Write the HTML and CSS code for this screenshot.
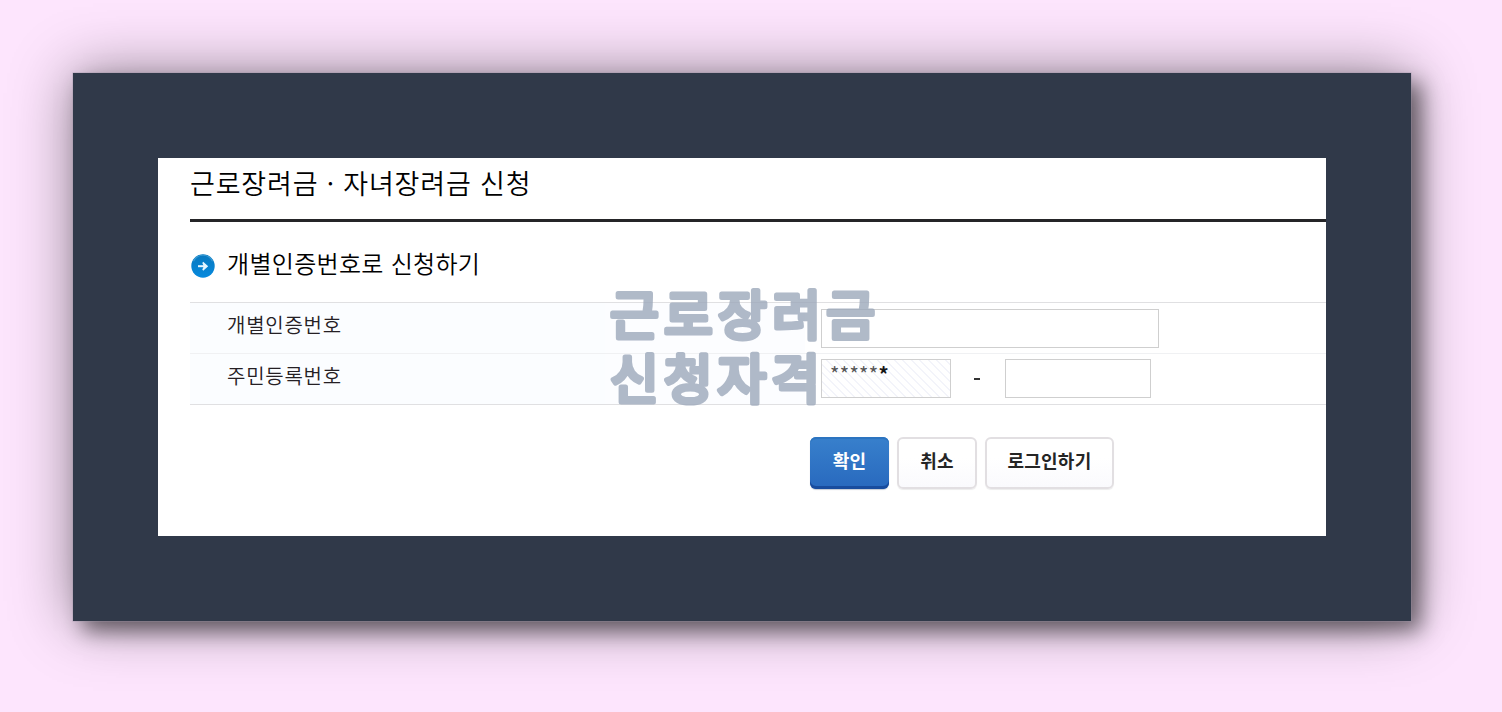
FILE: index.html
```
<!DOCTYPE html>
<html lang="ko">
<head>
<meta charset="utf-8">
<title>근로장려금 · 자녀장려금 신청</title>
<link rel="stylesheet" href="styles.css">
</head>
<body>
<div class="frame">
  <main class="panel">
    <h1 class="title">근로장려금 · 자녀장려금 신청</h1>
    <h2 class="subtitle">
      <svg class="arrow" viewBox="0 0 24 24" width="24" height="24">
        <defs><linearGradient id="disc" x1="0" y1="0" x2="0" y2="1"><stop offset="0" stop-color="#0878be"/><stop offset="1" stop-color="#078ade"/></linearGradient></defs>
        <circle cx="12" cy="12" r="11.7" fill="url(#disc)"/>
        <path d="M2.5 7.3a10.5 10.5 0 0 1 19 0" fill="none" stroke="#399bd4" stroke-width="1.2"/>
        <path d="M7 12.2h7" fill="none" stroke="#e6f6ff" stroke-width="2"/>
        <path d="M12.2 7.7l5 4.5-5 4.5-.9-1.3 1.5-3.2-1.5-3.2z" fill="#e6f6ff"/>
      </svg>
      <span>개별인증번호로 신청하기</span>
    </h2>
    <form class="form">
      <div class="row">
        <label class="label">개별인증번호</label>
        <div class="fields"><span class="box box-wide"></span></div>
      </div>
      <div class="row">
        <label class="label">주민등록번호</label>
        <div class="fields"><span class="box box-masked"><span class="stars">*****</span><b class="stars last">*</b></span><span class="dash"></span><span class="box box-short"></span></div>
      </div>
    </form>
    <div class="actions">
      <button class="btn primary">확인</button>
      <button class="btn cancel">취소</button>
      <button class="btn login">로그인하기</button>
    </div>
    <svg class="watermark" width="280" height="130" viewBox="0 0 280 130">
      <text x="6" y="53.5" textLength="265">근로장려금</text>
      <text x="6" y="117.5" textLength="210">신청자격</text>
    </svg>
  </main>
</div>
</body>
</html>
```
FILE: styles.css
```
* { box-sizing: border-box; }
body {
  margin: 0;
  height: 712px;
  overflow: hidden;
  padding: 73px 91px 91px 73px;
  background: #fde5fd;
  font-family: "Noto Sans CJK KR", "Noto Sans", sans-serif;
}
.frame {
  height: 548px;
  padding: 85px;
  background: #303949;
  box-shadow: 0 0 0 .5px rgba(160, 150, 170, .6), 10px 10px 20px rgba(0, 0, 0, .5), 0 0 58px rgba(0, 0, 0, .42);
}
.panel {
  position: relative;
  height: 378px;
  padding-left: 32px;
  background: #fff;
  overflow: hidden;
}
.title {
  margin: 0;
  height: 64px;
  border-bottom: 3px solid #252528;
  font-size: 27px;
  line-height: 49px;
  font-weight: 350;
  letter-spacing: .83px;
  color: #000;
  white-space: nowrap;
}
.subtitle {
  display: flex;
  gap: 12px;
  align-items: center;
  height: 80px;
  margin: 0;
  padding: 7px 0 0 1px;
  font-size: 24px;
  font-weight: 350;
  letter-spacing: .3px;
  line-height: 30px;
}
.subtitle span { padding-bottom: 6px; }
.form {
  height: 103px;
  border-top: 1px solid #e0e0e2;
  border-bottom: 1px solid #e0e0e2;
}
.row { display: flex; height: 50px; }
.row + .row { height: 51px; border-top: 1px solid #f0f1f3; }
.label {
  width: 415px;
  padding-left: 37px;
  background: #fbfdff;
  color: #252024;
  font-size: 20px;
  font-weight: 350;
  letter-spacing: .75px;
  line-height: 43px;
}
.fields {
  display: flex;
  flex: 1;
  padding: 6px 0 0 216px;
  background: linear-gradient(90deg, #fcfdff 200px, #fff 200px);
}
.row + .row .fields { padding-top: 5px; }
.box { display: block; height: 39px; border: 1px solid #cfcfcf; background: #fff; }
.box-wide { width: 338px; }
.box-masked {
  display: flex;
  width: 130px;
  padding-left: 8px;
  background: repeating-linear-gradient(45deg, #fff 0 4.5px, #f3f4fa 4.5px 6px);
}
.stars {
  font: 20px/28px "Noto Sans CJK KR", sans-serif;
  letter-spacing: .35px;
  color: #555;
}
.last { font-weight: 700; color: #151515; }
.dash { width: 6px; height: 2px; margin: 19px 25px 0 23px; background: #333; }
.box-short { width: 146px; }
.actions { display: flex; gap: 8px; padding: 32px 0 0 620px; }
.btn {
  height: 52px;
  padding: 0 0 7px;
  border: 2px solid #e2dfe2;
  border-radius: 6px;
  background: linear-gradient(#fff 40%, #fafafd) padding-box;
  box-shadow: 0 1px 1px #ededed;
  color: #252525;
  font: 700 18px/30px "Noto Sans CJK KR", sans-serif;
  letter-spacing: .2px;
}
.primary { width: 79px; border: 0; background: linear-gradient(#3880cc, #2869be); color: #fff; box-shadow: inset 0 2px #2c74c0, inset 0 -3px #184c9e, 0 1px 1px #c5cbd5; }
.cancel { width: 80px; }
.login { width: 129px; }
.watermark { position: absolute; left: 446px; top: 123px; opacity: .8; overflow: visible; }
.watermark text {
  font-size: 53px;
  font-weight: 400;
  fill: #9da9bb;
  stroke: #9da9bb;
  stroke-width: 5px;
  stroke-linejoin: round;
}
```
